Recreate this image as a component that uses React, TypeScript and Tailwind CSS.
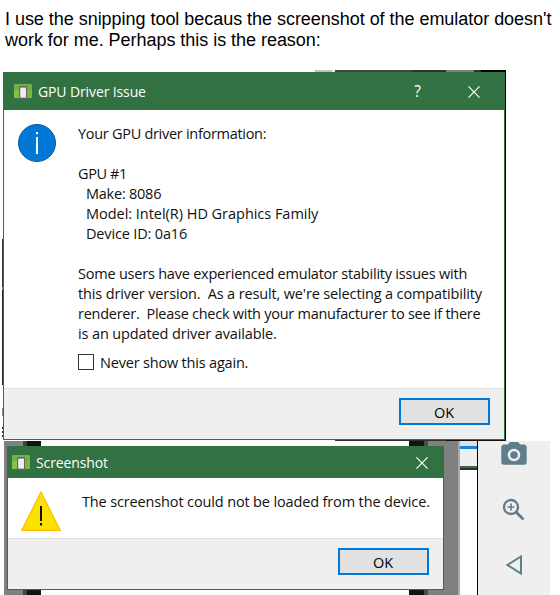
import type { ReactNode } from "react";

const UI = "font-['Open_Sans','Noto_Sans',sans-serif]";

function EmulatorIcon() {
  return (
    <svg width="19" height="16" viewBox="0 0 19 16" className="shrink-0">
      <rect x="0" y="0" width="18" height="14" rx="1" fill="#76b043" />
      <path d="M0 6h18v7a1 1 0 0 1-1 1H1a1 1 0 0 1-1-1z" fill="#86c04a" />
      <path d="M13 3l5 5v6h-5z" fill="#6ba33c" opacity=".4" />
      <rect x="5" y="2" width="8" height="13" rx=".8" fill="#656565" />
      <rect x="6.2" y="3.6" width="5.8" height="10" fill="#ededed" />
    </svg>
  );
}

function CloseIcon() {
  return (
    <svg width="12" height="12" viewBox="0 0 12 12" className="shrink-0">
      <path d="M.4.4l11.2 11.2M11.6.4L.4 11.6" stroke="#fff" strokeWidth="1.2" />
    </svg>
  );
}

function OkButton() {
  return (
    <button
      className={`${UI} flex h-[27px] w-[91px] items-center justify-center border-2 border-[#0078d7] bg-[#e1e1e1] pr-px pt-[3px] text-[14.5px] leading-none tracking-[-0.2px] text-black`}
    >
      OK
    </button>
  );
}

function Line({ children, className = "" }: { children?: ReactNode; className?: string }) {
  return <p className={`h-5 whitespace-pre leading-5 ${className}`}><span>{children}</span></p>;
}

function DriverDialog() {
  return (
    <section className={`${UI} flex h-[368px] w-[502px] shrink-0 flex-col border border-[#327141] bg-white text-[14.5px] text-[#111]`}>
      <header className="flex h-[37px] shrink-0 items-center bg-[#327141] pl-[10px] pr-[24px] text-white">
        <EmulatorIcon />
        <span className="ml-[5px] text-[14px] tracking-[-0.12px]">GPU Driver Issue</span>
        <span className="ml-auto mr-[47px] text-[15.5px]">?</span>
        <CloseIcon />
      </header>
      <div className="flex h-[278px] shrink-0 pl-[14px] pt-[14px]">
        <svg width="38" height="38" viewBox="0 0 38 38" className="shrink-0">
          <circle cx="19" cy="19" r="18.5" fill="#0078d7" stroke="#075aa0" />
          <path d="M19 13v17M19 8v2.2" stroke="#fff" strokeWidth="2" />
        </svg>
        <div className="ml-[22px]">
          <Line className="tracking-[-0.29px]">Your GPU driver information:</Line>
          <Line />
          <Line className="tracking-[-0.4px]">GPU #1</Line>
          <Line className="pl-2 tracking-[-0.24px]">Make: 8086</Line>
          <Line className="pl-2 tracking-[-0.03px]">Model: Intel(R) HD Graphics Family</Line>
          <Line className="pl-2 tracking-[-0.16px]">Device ID: 0a16</Line>
          <Line />
          <Line className="tracking-[-0.22px]">Some users have experienced emulator stability issues with</Line>
          <Line className="tracking-[-0.14px]">{"this driver version.  As a result, we're selecting a compatibility"}</Line>
          <Line className="tracking-[-0.26px]">{"renderer.  Please check with your manufacturer to see if there"}</Line>
          <Line className="tracking-[-0.12px]">is an updated driver available.</Line>
          <label className="mt-[8px] flex h-5 items-center gap-[6px]">
            <span className="h-4 w-4 border border-[#333] bg-white" />
            <Line className="mt-[2px] tracking-[-0.19px]">Never show this again.</Line>
          </label>
        </div>
      </div>
      <footer className="flex grow justify-end border-t border-[#dfdfdf] bg-[#efefef] pr-[14px] pt-[9px]">
        <OkButton />
      </footer>
    </section>
  );
}

function ScreenshotDialog() {
  return (
    <section className={`${UI} flex h-[144px] w-[437px] flex-col border border-[#327141] bg-white text-[14.5px] text-[#111]`}>
      <header className="flex h-[31px] shrink-0 items-center bg-[#327141] pl-1 pr-[15px] text-white">
        <EmulatorIcon />
        <span className="ml-[5px] text-[14px] tracking-[-0.12px]">Screenshot</span>
        <span className="ml-auto"><CloseIcon /></span>
      </header>
      <div className="flex h-[60px] shrink-0 pl-[13px] pt-[13px]">
        <svg width="40" height="40" viewBox="0 0 40 40" className="shrink-0">
          <path d="M20 1L39.3 39.4H.7z" fill="#fce100" stroke="#ffb900" strokeWidth="1.2" />
          <path d="M20 15v15M20 32v2.4" stroke="#111" strokeWidth="2" />
        </svg>
        <Line className="ml-[21px] mt-px tracking-[-0.14px]">The screenshot could not be loaded from the device.</Line>
      </div>
      <footer className="flex grow justify-end border-t border-[#dfdfdf] bg-[#efefef] pr-[14px] pt-[9px]">
        <OkButton />
      </footer>
    </section>
  );
}

function Toolbar() {
  return (
    <aside className="flex h-full w-[73px] flex-col items-center border-l border-black bg-[#efefef] text-[#607d8b]">
      <svg width="26" height="24" viewBox="0 0 26 24" fill="currentColor" className="mt-px">
        <path d="M9 0h8l2.3 2.5H23A2.6 2.6 0 0 1 25.7 5v15A2.6 2.6 0 0 1 23 22.8H3A2.6 2.6 0 0 1 .3 20V5A2.6 2.6 0 0 1 3 2.5h3.7z" />
        <circle cx="13" cy="13" r="5" fill="none" stroke="#efefef" strokeWidth="2.5" />
      </svg>
      <svg width="24" height="24" viewBox="0 0 24 24" fill="none" stroke="currentColor" className="mt-[32px]">
        <circle cx="9" cy="9" r="7" strokeWidth="2.3" />
        <path d="M14 14l7.5 7.5" strokeWidth="2.8" />
        <path d="M9 5.6v6.8M5.6 9h6.8" strokeWidth="1.6" />
      </svg>
      <svg width="18" height="20" viewBox="0 0 18 20" fill="none" stroke="currentColor" strokeWidth="2" className="mr-px mt-[33px]">
        <path d="M16 1.5v17L2.5 10z" />
      </svg>
    </aside>
  );
}

export default function App() {
  return (
    <main className="flex h-[595px] w-[560px] flex-col overflow-hidden bg-white">
      <p className="h-[70px] whitespace-pre pl-[5px] pt-[9px] font-['Liberation_Sans',Arial,sans-serif] text-[18px] leading-[21px] tracking-[-0.035px] text-black">
        I use the snipping tool becaus the screenshot of the emulator doesn't{"\n"}work for me. Perhaps this is the reason:
      </p>
      <div className="flex h-[2px] shrink-0 pl-[315px]">
        <span className="w-[17px] bg-[#c0c0c0]" />
        <span className="w-[3px] bg-[#f0f0f0]" />
        <span className="w-[77px] bg-[#424347]" />
        <span className="w-[34px] bg-[#303030]" />
        <span className="w-[28px] bg-[#808080]" />
        <span className="w-[7px] bg-[#303030]" />
        <span className="w-[25px] bg-black" />
      </div>
      <div className="flex h-[368px] shrink-0">
        <div className="flex w-[3px] shrink-0 flex-col items-end pt-[167px]">
          <span className="h-[48px] w-px bg-[#333]" />
          <span className="h-[3px] w-px bg-[#40a8c0]" />
          <span className="h-[95px] w-px bg-[#222]" />
          <span className="mt-[23px] h-[8px] w-px bg-[#888]" />
          <span className="mt-[11px] h-[2px] w-px bg-[#222]" />
          <span className="mt-[2px] h-[2px] w-px bg-[#222]" />
          <span className="mt-[2px] h-[2px] w-px bg-[#222]" />
        </div>
        <DriverDialog />
        <span className="w-px bg-black" />
      </div>
      <div className="flex h-px shrink-0">
        <span className="ml-[335px] w-[111px] bg-[#303030]" />
        <span className="w-[60px] bg-[#111]" />
      </div>
      <div className="flex h-[154px] shrink-0 pl-1">
        <div className="relative flex w-[456px] shrink-0">
          <span className="w-[19px] bg-[#808080]" />
          <span className="w-[4px] bg-[#404245]" />
          <span className="w-[14px] bg-[#111414]" />
          <span className="w-[368px] bg-[#fcfcfc]" />
          <span className="w-[15px] bg-[#111414]" />
          <span className="w-[4px] bg-[#48494b]" />
          <span className="w-[30px] bg-[#808080]" />
          <span className="w-[2px] bg-[#aaa]" />
          <div className="absolute left-[3px] top-[5px]"><ScreenshotDialog /></div>
        </div>
        <div className="flex w-[17px] flex-col">
          <span className="h-[5px] bg-[#e1e1e1]" />
          <span className="h-[3px] bg-[#1783da]" />
          <span className="h-[17px] bg-[#efefef]" />
          <span className="h-[2px] bg-[#327141]" />
          <span className="h-[2px] bg-[#303036]" />
        </div>
        <Toolbar />
      </div>
    </main>
  );
}
